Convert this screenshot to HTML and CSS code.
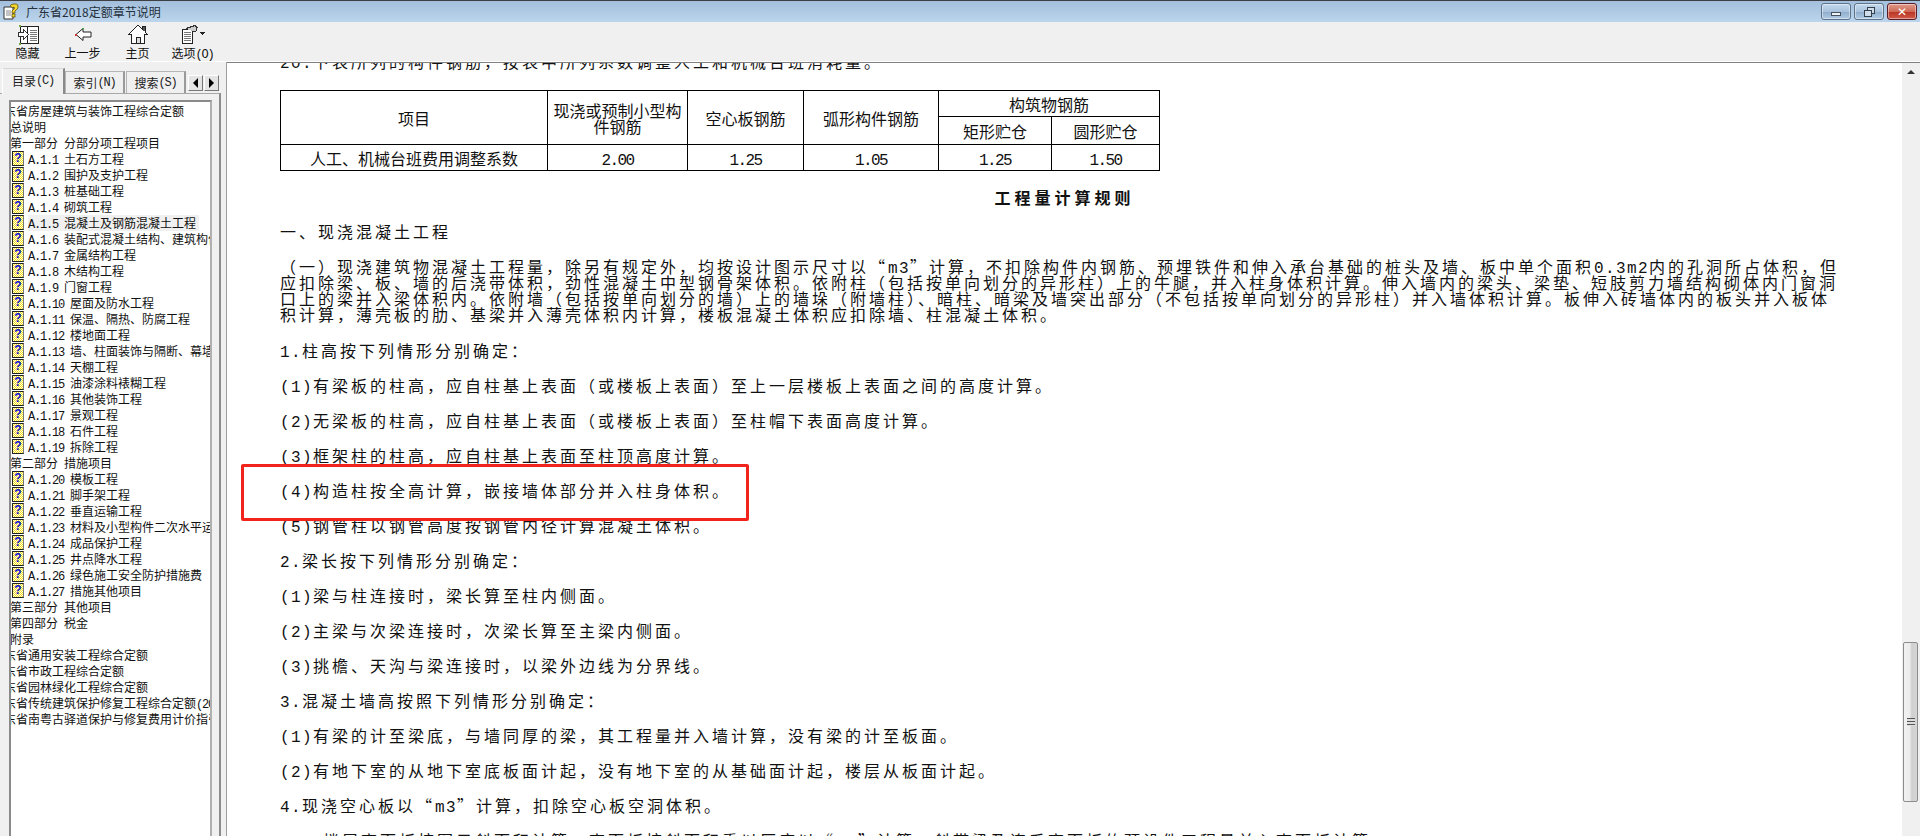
FILE: index.html
```html
<!DOCTYPE html>
<html lang="zh-CN">
<head>
    <meta charset="UTF-8">
    <title>广东省2018定额章节说明</title>
    <link rel="stylesheet" href="styles.css">
</head>
<body>
    <div class="titlebar">
        <svg class="app-icon" width="18" height="18" viewBox="0 0 18 18">
            <path d="M2 4h9v12H2z" fill="#fff" stroke="#333"/>
            <path d="M4 8h5M4 10h5M4 12h5" stroke="#888"/>
            <path d="M8 3q1-2 4-2h2q2 0 2 3 0 2-2 3l-1 1v2h-3V8l2-2q1-1 0-2-1 0-1 1z" fill="#f4d92c" stroke="#554400" stroke-width=".7"/>
            <rect x="10" y="11" width="3" height="3" fill="#f4d92c" stroke="#554400" stroke-width=".7"/>
        </svg>
        <span class="title-text">广东省2018定额章节说明</span>
        <div class="win-buttons">
            <div class="win-btn"><span class="min-glyph"></span></div>
            <div class="win-btn"><span class="max-glyph"></span></div>
            <div class="win-btn close"><span class="close-glyph">✕</span></div>
        </div>
    </div>
    <div class="toolbar">
        <div class="tool">
            <svg width="22" height="21" viewBox="0 0 22 21" shape-rendering="crispEdges">
                <path d="M3.5 2.5h18v17h-18z" fill="#fff" stroke="#222"/>
                <path d="M10.5 2.5v17" stroke="#222"/>
                <path d="M13 6h7M13 8h7M13 10h7M13 12h7M13 14h7M13 16h7" stroke="#777"/>
                <path d="M1.5 8.5h5v-3l5 5-5 5v-3h-5z" fill="#fff" stroke="#333"/>
                <rect x="2" y="1" width="2" height="2" fill="#7a4"/>
                <rect x="2" y="19" width="2" height="2" fill="#7a4"/>
            </svg>
            <span>隐藏</span>
        </div>
        <div class="tool">
            <svg width="22" height="21" viewBox="0 0 22 21">
                <path d="M4 10.5l7-6v3.5h8v5h-8v3.5z" fill="#fff" stroke="#222"/>
                <rect x="3" y="10" width="2" height="2" fill="#c33"/>
                <rect x="10" y="4" width="2" height="1" fill="#3a3"/>
            </svg>
            <span>上一步</span>
        </div>
        <div class="tool">
            <svg width="22" height="21" viewBox="0 0 22 21" shape-rendering="crispEdges">
                <path d="M11 1L1.5 10.5h3v9h13v-9h3L18 8V2h-3v3z" fill="#fff" stroke="#222"/>
                <path d="M9 19.5v-6h4v6z" fill="#ddd" stroke="#222"/>
                <path d="M16 2.5h2v4h-2z" fill="#555"/>
            </svg>
            <span>主页</span>
        </div>
        <div class="tool">
            <svg width="26" height="21" viewBox="0 0 26 21" shape-rendering="crispEdges">
                <path d="M2.5 5.5h10v14h-10z" fill="#fff" stroke="#222"/>
                <path d="M4 8h7M4 10h7M4 12h7M4 14h7M4 16h7" stroke="#777"/>
                <path d="M6 4.5l9-3 2 2-1 4h-3" fill="#ccc" stroke="#333"/>
                <path d="M19 8h6l-3 3z" fill="#222"/>
            </svg>
            <span>选项<span class="code">(O)</span></span>
        </div>
    </div>
    <div class="main">
        <div class="nav">
            <div class="tabs">
                <div class="tab active">目录<span class="code">(C)</span></div>
                <div class="tab">索引<span class="code">(N)</span></div>
                <div class="tab">搜索<span class="code">(S)</span></div>
                <div class="tab-arrows">
                    <div class="tab-arrow"><span class="tri-left"></span></div>
                    <div class="tab-arrow"><span class="tri-right"></span></div>
                </div>
            </div>
            <div class="tab-panel">
                <div class="tree">
                    <div class="row root">广东省房屋建筑与装饰工程综合定额</div>
                    <div class="row top">总说明</div>
                    <div class="row top">第一部分<span class="code"> </span>分部分项工程项目</div>
                    <div class="row"><i class="help">?</i><span class="code">A.1.1 </span>土石方工程</div>
                    <div class="row"><i class="help">?</i><span class="code">A.1.2 </span>围护及支护工程</div>
                    <div class="row"><i class="help">?</i><span class="code">A.1.3 </span>桩基础工程</div>
                    <div class="row"><i class="help">?</i><span class="code">A.1.4 </span>砌筑工程</div>
                    <div class="row"><i class="help">?</i><span class="sel"><span class="code">A.1.5 </span>混凝土及钢筋混凝土工程</span></div>
                    <div class="row"><i class="help">?</i><span class="code">A.1.6 </span>装配式混凝土结构、建筑构件及部品工程</div>
                    <div class="row"><i class="help">?</i><span class="code">A.1.7 </span>金属结构工程</div>
                    <div class="row"><i class="help">?</i><span class="code">A.1.8 </span>木结构工程</div>
                    <div class="row"><i class="help">?</i><span class="code">A.1.9 </span>门窗工程</div>
                    <div class="row"><i class="help">?</i><span class="code">A.1.10 </span>屋面及防水工程</div>
                    <div class="row"><i class="help">?</i><span class="code">A.1.11 </span>保温、隔热、防腐工程</div>
                    <div class="row"><i class="help">?</i><span class="code">A.1.12 </span>楼地面工程</div>
                    <div class="row"><i class="help">?</i><span class="code">A.1.13 </span>墙、柱面装饰与隔断、幕墙工程</div>
                    <div class="row"><i class="help">?</i><span class="code">A.1.14 </span>天棚工程</div>
                    <div class="row"><i class="help">?</i><span class="code">A.1.15 </span>油漆涂料裱糊工程</div>
                    <div class="row"><i class="help">?</i><span class="code">A.1.16 </span>其他装饰工程</div>
                    <div class="row"><i class="help">?</i><span class="code">A.1.17 </span>景观工程</div>
                    <div class="row"><i class="help">?</i><span class="code">A.1.18 </span>石件工程</div>
                    <div class="row"><i class="help">?</i><span class="code">A.1.19 </span>拆除工程</div>
                    <div class="row top">第二部分<span class="code"> </span>措施项目</div>
                    <div class="row"><i class="help">?</i><span class="code">A.1.20 </span>模板工程</div>
                    <div class="row"><i class="help">?</i><span class="code">A.1.21 </span>脚手架工程</div>
                    <div class="row"><i class="help">?</i><span class="code">A.1.22 </span>垂直运输工程</div>
                    <div class="row"><i class="help">?</i><span class="code">A.1.23 </span>材料及小型构件二次水平运输工程</div>
                    <div class="row"><i class="help">?</i><span class="code">A.1.24 </span>成品保护工程</div>
                    <div class="row"><i class="help">?</i><span class="code">A.1.25 </span>井点降水工程</div>
                    <div class="row"><i class="help">?</i><span class="code">A.1.26 </span>绿色施工安全防护措施费</div>
                    <div class="row"><i class="help">?</i><span class="code">A.1.27 </span>措施其他项目</div>
                    <div class="row top">第三部分<span class="code"> </span>其他项目</div>
                    <div class="row top">第四部分<span class="code"> </span>税金</div>
                    <div class="row top">附录</div>
                    <div class="row root">广东省通用安装工程综合定额</div>
                    <div class="row root">广东省市政工程综合定额</div>
                    <div class="row root">广东省园林绿化工程综合定额</div>
                    <div class="row root">广东省传统建筑保护修复工程综合定额<span class="code">(2018)</span></div>
                    <div class="row root">广东省南粤古驿道保护与修复费用计价指引</div>
                </div>
            </div>
        </div>
        <div class="content">
            <div class="page">
                <p class="first"><span class="n">20.</span>下表所列的构件钢筋，按表中所列系数调整人工和机械台班消耗量。</p>
                <table class="coef">
                    <colgroup>
                        <col class="c1"><col class="c2"><col class="c3"><col class="c4"><col class="c5"><col class="c6">
                    </colgroup>
                    <tr class="h1">
                        <td rowspan="2">项目</td>
                        <td rowspan="2">现浇或预制小型构件钢筋</td>
                        <td rowspan="2">空心板钢筋</td>
                        <td rowspan="2">弧形构件钢筋</td>
                        <td colspan="2">构筑物钢筋</td>
                    </tr>
                    <tr class="h2">
                        <td>矩形贮仓</td>
                        <td>圆形贮仓</td>
                    </tr>
                    <tr class="r1">
                        <td>人工、机械台班费用调整系数</td>
                        <td><span class="t">2.00</span></td>
                        <td><span class="t">1.25</span></td>
                        <td><span class="t">1.05</span></td>
                        <td><span class="t">1.25</span></td>
                        <td><span class="t">1.50</span></td>
                    </tr>
                </table>
                <h4 class="rule-title">工程量计算规则</h4>
                <p class="head">一、现浇混凝土工程</p>
                <p class="lead">（一）现浇建筑物混凝土工程量，除另有规定外，均按设计图示尺寸以“<span class="n">m3</span>”计算，不扣除构件内钢筋、预埋铁件和伸入承台基础的桩头及墙、板中单个面积<span class="n">0.3m2</span>内的孔洞所占体积，但<br>应扣除梁、板、墙的后浇带体积，劲性混凝土中型钢骨架体积。依附柱（包括按单向划分的异形柱）上的牛腿，并入柱身体积计算。伸入墙内的梁头、梁垫、短肢剪力墙结构砌体内门窗洞<br>口上的梁并入梁体积内。依附墙（包括按单向划分的墙）上的墙垛（附墙柱）、暗柱、暗梁及墙突出部分（不包括按单向划分的异形柱）并入墙体积计算。板伸入砖墙体内的板头并入板体<br>积计算，薄壳板的肋、基梁并入薄壳体积内计算，楼板混凝土体积应扣除墙、柱混凝土体积。</p>
                <p><span class="n">1.</span>柱高按下列情形分别确定：</p>
                <p><span class="n">(1)</span>有梁板的柱高，应自柱基上表面（或楼板上表面）至上一层楼板上表面之间的高度计算。</p>
                <p><span class="n">(2)</span>无梁板的柱高，应自柱基上表面（或楼板上表面）至柱帽下表面高度计算。</p>
                <p><span class="n">(3)</span>框架柱的柱高，应自柱基上表面至柱顶高度计算。</p>
                <p><span class="n">(4)</span>构造柱按全高计算，嵌接墙体部分并入柱身体积。</p>
                <p><span class="n">(5)</span>钢管柱以钢管高度按钢管内径计算混凝土体积。</p>
                <p><span class="n">2.</span>梁长按下列情形分别确定：</p>
                <p><span class="n">(1)</span>梁与柱连接时，梁长算至柱内侧面。</p>
                <p><span class="n">(2)</span>主梁与次梁连接时，次梁长算至主梁内侧面。</p>
                <p><span class="n">(3)</span>挑檐、天沟与梁连接时，以梁外边线为分界线。</p>
                <p><span class="n">3.</span>混凝土墙高按照下列情形分别确定：</p>
                <p><span class="n">(1)</span>有梁的计至梁底，与墙同厚的梁，其工程量并入墙计算，没有梁的计至板面。</p>
                <p><span class="n">(2)</span>有地下室的从地下室底板面计起，没有地下室的从基础面计起，楼层从板面计起。</p>
                <p><span class="n">4.</span>现浇空心板以“<span class="n">m3</span>”计算，扣除空心板空洞体积。</p>
                <p class="indent"><span class="n">5.</span>楼层高面板按图示斜面积计算，高面板按斜面积乘以厚度以“<span class="n">m3</span>”计算，斜带梁及连系高面板的预设件工程量并入高面板计算。</p>
            </div>
            <div class="mark"></div>
        </div>
        <div class="scrollbar">
            <div class="scroll-up"></div>
            <div class="thumb"><span class="grip"></span></div>
        </div>
    </div>
</body>
</html>
```

FILE: styles.css
```css
* {
    box-sizing: border-box;
}
html, body {
    margin: 0;
    height: 836px;
    overflow: hidden;
}
body {
    display: flex;
    flex-direction: column;
    background: #f0f0f0;
    color: #000;
    font-family: "Noto Sans CJK SC", "Liberation Sans", sans-serif;
    font-size: 12px;
}

/* title bar */
.titlebar {
    height: 22px;
    display: flex;
    align-items: center;
    padding-left: 2px;
    background: linear-gradient(#a3bfdc, #bcd5ed);
    border-top: 1px solid #3c3f44;
}
.app-icon {
    margin-right: 6px;
}
.title-text {
    color: #24303c;
    line-height: 16px;
}
.win-buttons {
    margin-left: auto;
    display: flex;
    gap: 3px;
    padding-right: 3px;
}
.win-btn {
    width: 30px;
    height: 17px;
    display: flex;
    align-items: center;
    justify-content: center;
    border: 1px solid #5d7389;
    border-radius: 3px;
    background: linear-gradient(#c3d8ec 0, #a9c3de 50%, #8dabc9 51%, #b0cbe5 100%);
    box-shadow: inset 0 0 0 1px rgba(255, 255, 255, .45);
}
.win-btn.close {
    border-color: #5a1c24;
    background: linear-gradient(#e09a8a 0, #cf6a58 50%, #b83322 51%, #cf5a48 100%);
}
.min-glyph {
    width: 10px;
    height: 4px;
    margin-top: 4px;
    background: #eef3f8;
    border: 1px solid #44525f;
}
.max-glyph {
    width: 8px;
    height: 7px;
    margin: 3px 3px 0 0;
    border: 1px solid #333f4a;
    box-shadow: 3px -3px 0 -1px #cfdce9, 3px -3px 0 0 #333f4a;
    background: #cfdce9;
}
.close-glyph {
    color: #fff;
    font-family: "DejaVu Sans", sans-serif;
    font-size: 12px;
    font-weight: bold;
    line-height: 14px;
}

/* toolbar */
.toolbar {
    height: 39px;
    display: flex;
    background: #f0f0f0;
}
.tool {
    width: 55px;
    display: flex;
    flex-direction: column;
    align-items: center;
    padding-top: 2px;
    line-height: 15px;
    color: #111;
}
.tool svg {
    display: block;
}
.code {
    font-family: "Liberation Mono", monospace;
    font-size: 12px;
    letter-spacing: -1.2px;
    line-height: 0;
    white-space: pre;
}

/* main area */
.main {
    flex: 1;
    min-height: 0;
    display: flex;
    border-top: 1px solid #fff;
}
.nav {
    width: 227px;
    flex: none;
    display: flex;
    flex-direction: column;
    padding: 6px 5px 0 0;
    background: #f0f0f0;
    border-right: 1px solid #a0a0a0;
}
.tabs {
    display: flex;
    height: 25px;
    padding-left: 2px;
    align-items: flex-end;
}
.tab {
    width: 60px;
    height: 22px;
    display: flex;
    align-items: center;
    justify-content: center;
    margin-right: 1px;
    background: #f0f0f0;
    border: 1px solid #b5b5b5;
    border-bottom: none;
    border-right: 2px solid #9a9a9a;
    color: #222;
}
.tab.active {
    width: 63px;
    height: 26px;
    margin-right: 0;
    position: relative;
    z-index: 1;
    margin-bottom: -1px;
    padding-bottom: 2px;
    border-color: #d8d8d8 #8a8a8a transparent #ffffff;
}
.tab-arrows {
    display: flex;
    gap: 1px;
    align-self: flex-start;
    margin: 7px 0 0 1px;
}
.tab-arrow {
    width: 15px;
    height: 16px;
    display: flex;
    align-items: center;
    justify-content: center;
    border: 1px solid #fff;
    border-right-color: #777;
    border-bottom-color: #777;
    background: #e4e4e4;
}
.tri-left, .tri-right {
    border-top: 5px solid transparent;
    border-bottom: 5px solid transparent;
}
.tri-left {
    border-right: 5px solid #000;
}
.tri-right {
    border-left: 5px solid #000;
}
.tab-panel {
    flex: 1;
    min-height: 0;
    padding: 6px 7px 0 9px;
    border-top: 1px solid #a8a8a8;
    border-right: 2px solid #8c8c8c;
}
.tree {
    height: 100%;
    padding-top: 1px;
    overflow: hidden;
    background: #fff;
    border: 2px solid #8a8a8a;
    border-right-color: #b0b0b0;
    border-bottom: none;
}
.row {
    height: 16px;
    line-height: 16px;
    white-space: nowrap;
    color: #111;
    padding-left: 1px;
}
.row.root {
    margin-left: -19px;
    padding-left: 0;
}
.row.top {
    margin-left: -1px;
    padding-left: 0;
}
.sel {
    display: inline-block;
    height: 16px;
    background: #f0f0f0;
    padding-right: 3px;
}
.help {
    display: inline-block;
    width: 12px;
    height: 15px;
    margin-right: 4px;
    vertical-align: top;
    border: 1px solid #222;
    border-right-color: #777;
    background: repeating-conic-gradient(#f2e020 0 25%, #fffbe0 0 50%) 0 0 / 2px 2px;
    color: #1010d0;
    font-family: "Liberation Sans", sans-serif;
    font-size: 12px;
    font-style: normal;
    font-weight: bold;
    line-height: 13px;
    text-align: center;
}

/* document */
.content {
    flex: 1;
    min-width: 0;
    position: relative;
    overflow: hidden;
    background: #fff;
    border-top: 1px solid #808080;
}
.page {
    margin-top: -10px;
    padding-left: 53px;
    font-size: 16px;
    line-height: 16px;
    letter-spacing: 3px;
    white-space: nowrap;
    color: #111;
}
.page p {
    margin: 0 0 19px;
}
.page .first {
    margin-bottom: 21px;
}
.page .lead {
    margin-bottom: 20px;
}
.page .indent {
    padding-left: 21px;
}
.n {
    font-family: "Liberation Mono", monospace;
    font-size: 16px;
    letter-spacing: 1.4px;
    line-height: 0;
}
.coef {
    border-collapse: collapse;
    table-layout: fixed;
    width: 879px;
    letter-spacing: 0;
    text-align: center;
    white-space: normal;
}
.coef td {
    border: 1px solid #000;
    padding: 0 2px;
}
.c1 { width: 267px; }
.c2 { width: 140px; }
.c3 { width: 116px; }
.c4 { width: 135px; }
.c5 { width: 113px; }
.c6 { width: 108px; }
.h1 { height: 26px; }
.h2 { height: 28px; }
.r1 { height: 26px; }
.t {
    font-family: "Liberation Mono", monospace;
    font-size: 16px;
    letter-spacing: -1.6px;
    line-height: 0;
}
.rule-title {
    margin: 18px 0 18px;
    padding-right: 53px;
    font-size: 16px;
    line-height: 16px;
    text-align: center;
    letter-spacing: 4px;
}
.mark {
    position: absolute;
    left: 14px;
    top: 401px;
    width: 508px;
    height: 57px;
    border: 3px solid #f2231a;
    border-radius: 2px;
}

/* scrollbar */
.scrollbar {
    width: 18px;
    flex: none;
    padding: 0 2px 0 1px;
    background: #f0f0f0;
    border-top: 1px solid #808080;
}
.scroll-up {
    width: 0;
    margin: 7px auto 0;
    border-left: 4px solid transparent;
    border-right: 4px solid transparent;
    border-bottom: 4px solid #333;
}
.thumb {
    height: 160px;
    margin-top: 568px;
    display: flex;
    align-items: center;
    justify-content: center;
    border: 1px solid #8c8c8c;
    border-radius: 2px;
    background: linear-gradient(90deg, #f2f2f2, #ececec 45%, #cfcfcf 60%, #d6d6d6);
}
.grip {
    width: 8px;
    height: 8px;
    background: repeating-linear-gradient(#555 0 1px, #ddd 1px 3px);
}
```
